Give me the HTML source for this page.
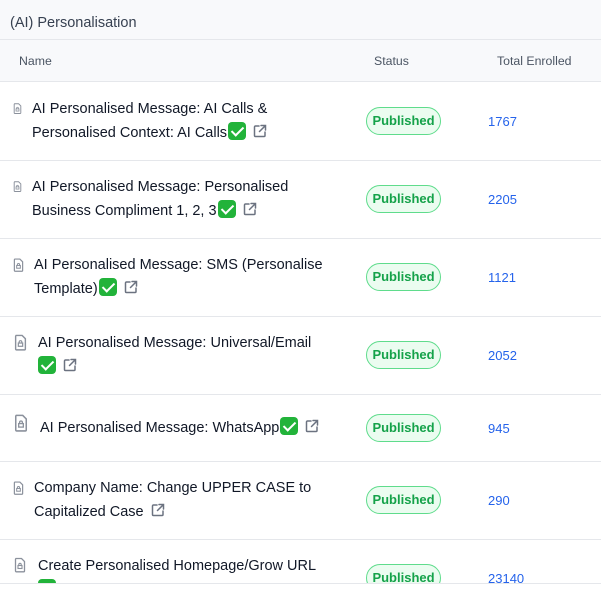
<!DOCTYPE html>
<html><head><meta charset="utf-8"><style>
*{margin:0;padding:0;box-sizing:border-box}
body{width:601px;height:601px;overflow:hidden;background:#fff;font-family:"Liberation Sans",sans-serif;position:relative}
.top{position:absolute;left:0;top:0;width:601px;height:40px;background:#f8f9fb;border-bottom:1px solid #e5e7eb}
.top span{position:absolute;left:10px;top:15px;font-size:14.5px;color:#374151}
.head{position:absolute;left:0;top:40px;width:601px;height:42px;background:#f8f9fb;border-bottom:1px solid #e5e7eb;font-size:12.3px;color:#4b5563}
.head span{position:absolute;top:14px}
.sep{position:absolute;left:0;width:601px;height:1px;background:#e5e7eb}
.t{position:absolute;font-size:14.5px;line-height:24px;color:#111827;white-space:nowrap}
.ck{display:inline-block;width:18px;height:18px;background:#22b33a;border-radius:4px;vertical-align:-3px;position:relative;margin-left:1px}
.ck:after{content:"";position:absolute;left:6px;top:2px;width:5px;height:10px;border:solid #fff;border-width:0 2.5px 2.5px 0;transform:rotate(45deg)}
.ext{display:inline-block;vertical-align:-1px;margin-left:7px}
.pill{position:absolute;left:366px;width:75px;height:28px;border:1px solid #5fdc8c;background:#ebfcf0;border-radius:14px;color:#15a24a;font-weight:bold;font-size:13px;text-align:center;line-height:26px}
.num{position:absolute;left:488px;font-size:13px;color:#2563eb}
.ic{position:absolute}
.bot{position:absolute;left:0;top:583px;width:601px;height:18px;background:#fff;border-top:1px solid #e5e7eb}
</style></head><body>
<div class="top"><span>(AI) Personalisation</span></div>
<div class="head"><span style="left:19px">Name</span><span style="left:374px">Status</span><span style="left:497px">Total Enrolled</span></div>

<svg width="0" height="0" style="position:absolute"><defs>
<symbol id="f" viewBox="0 0 12 15"><path d="M1.5 1h6l3 3v9.5a.8.8 0 0 1-.8.8H2.3a.8.8 0 0 1-.8-.8V1.8a.8.8 0 0 1 .8-.8z" fill="none" stroke="#8b919c" stroke-width="1.3"/><rect x="4" y="8" width="4" height="3" fill="none" stroke="#8b919c" stroke-width="1.1"/><path d="M4.8 8V7a1.2 1.2 0 0 1 2.4 0v1" fill="none" stroke="#8b919c" stroke-width="1.1"/></symbol>
<symbol id="e" viewBox="0 0 14 14"><path d="M6 2H2.5A1 1 0 0 0 1.5 3v8.5a1 1 0 0 0 1 1H11a1 1 0 0 0 1-1V8M8 1.5h4.5V6M12.5 1.5L6.5 7.5" fill="none" stroke="#6b7280" stroke-width="1.5" stroke-linecap="round"/></symbol>
</defs></svg>

<svg class="ic" style="left:13px;top:103px" width="9" height="11"><use href="#f"/></svg>
<div class="t" style="left:32px;top:97px">AI Personalised Message: AI Calls &amp;<br>Personalised Context: AI Calls<span class="ck"></span><svg class="ext" width="14" height="14"><use href="#e"/></svg></div>
<div class="pill" style="top:107px">Published</div><div class="num" style="top:114px">1767</div>
<div class="sep" style="top:160px"></div>

<svg class="ic" style="left:13px;top:181px" width="9" height="11"><use href="#f"/></svg>
<div class="t" style="left:32px;top:175px">AI Personalised Message: Personalised<br>Business Compliment 1, 2, 3<span class="ck"></span><svg class="ext" width="14" height="14"><use href="#e"/></svg></div>
<div class="pill" style="top:185px">Published</div><div class="num" style="top:192px">2205</div>
<div class="sep" style="top:238px"></div>

<svg class="ic" style="left:13px;top:258px" width="11" height="14"><use href="#f"/></svg>
<div class="t" style="left:34px;top:253px">AI Personalised Message: SMS (Personalise<br>Template)<span class="ck"></span><svg class="ext" width="14" height="14"><use href="#e"/></svg></div>
<div class="pill" style="top:263px">Published</div><div class="num" style="top:270px">1121</div>
<div class="sep" style="top:316px"></div>

<svg class="ic" style="left:14px;top:334px" width="13" height="17"><use href="#f"/></svg>
<div class="t" style="left:38px;top:331px">AI Personalised Message: Universal/Email<br><span class="ck" style="margin-left:0"></span><svg class="ext" width="14" height="14"><use href="#e"/></svg></div>
<div class="pill" style="top:341px">Published</div><div class="num" style="top:348px">2052</div>
<div class="sep" style="top:394px"></div>

<svg class="ic" style="left:14px;top:414px" width="14" height="18"><use href="#f"/></svg>
<div class="t" style="left:40px;top:416px">AI Personalised Message: WhatsApp<span class="ck"></span><svg class="ext" width="14" height="14"><use href="#e"/></svg></div>
<div class="pill" style="top:414px">Published</div><div class="num" style="top:421px">945</div>
<div class="sep" style="top:461px"></div>

<svg class="ic" style="left:13px;top:481px" width="11" height="14"><use href="#f"/></svg>
<div class="t" style="left:34px;top:476px">Company Name: Change UPPER CASE to<br>Capitalized Case<svg class="ext" width="14" height="14"><use href="#e"/></svg></div>
<div class="pill" style="top:486px">Published</div><div class="num" style="top:493px">290</div>
<div class="sep" style="top:539px"></div>

<svg class="ic" style="left:14px;top:557px" width="12" height="16"><use href="#f"/></svg>
<div class="t" style="left:38px;top:554px">Create Personalised Homepage/Grow URL<br><span class="ck" style="margin-left:0"></span></div>
<div class="pill" style="top:564px">Published</div><div class="num" style="top:571px">23140</div>
<div class="bot"></div>
</body></html>
